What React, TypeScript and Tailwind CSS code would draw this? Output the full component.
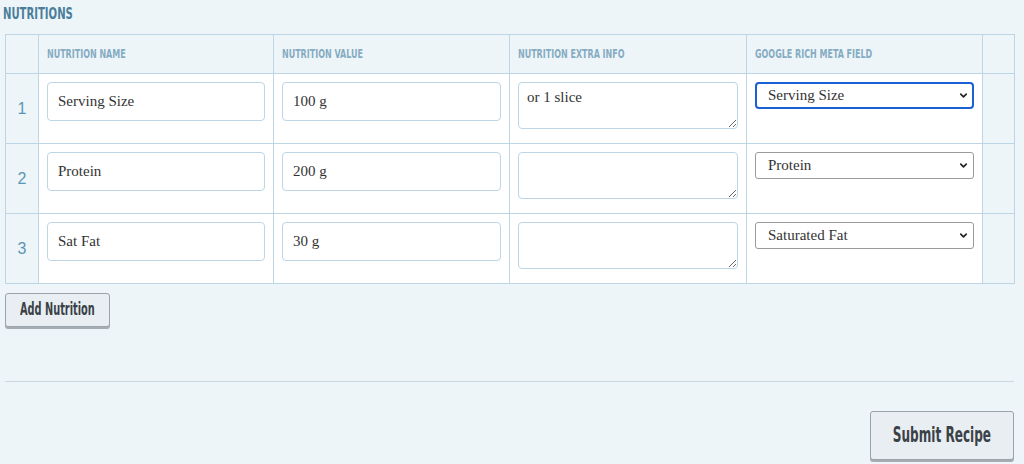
import { ChevronDown } from 'lucide-react';

const rows = [
    { name: 'Serving Size', value: '100 g', extra: 'or 1 slice', meta: 'Serving Size', focused: true },
    { name: 'Protein', value: '200 g', extra: '', meta: 'Protein', focused: false },
    { name: 'Sat Fat', value: '30 g', extra: '', meta: 'Saturated Fat', focused: false },
];

const metaOptions = ['Serving Size', 'Calories', 'Protein', 'Saturated Fat', 'Fat', 'Carbohydrate'];

const narrow = { fontFamily: '"DejaVu Sans Condensed", "DejaVu Sans", sans-serif' };
const serif = { fontFamily: '"Liberation Serif", "DejaVu Serif", serif' };

export default function App() {
    return (
        <div className="w-[1024px] h-[464px] overflow-hidden bg-[#eef5f9] pl-[5px] pr-[10px]">
            <h2 style={narrow} className="pt-[5px] h-[34px] -ml-[2px] text-[16px] font-semibold leading-[18px] text-[#4a7e9b] whitespace-nowrap">
                <span className="inline-block origin-left scale-x-[0.7]">NUTRITIONS</span>
            </h2>

            <table className="w-[1009px] table-fixed border-collapse">
                <colgroup>
                    <col className="w-[33px]" />
                    <col className="w-[235px]" />
                    <col className="w-[236px]" />
                    <col className="w-[237px]" />
                    <col className="w-[236px]" />
                    <col className="w-[32px]" />
                </colgroup>
                <thead>
                    <tr className="h-[39px] bg-[#eef5f9]">
                        <th className="border border-[#bcd6e6]"></th>
                        {['NUTRITION NAME', 'NUTRITION VALUE', 'NUTRITION EXTRA INFO', 'GOOGLE RICH META FIELD'].map((h) => (
                            <th
                                key={h}
                                style={narrow}
                                className="border border-[#bcd6e6] px-[8px] text-left text-[12px] font-bold text-[#85acc2] whitespace-nowrap"
                            >
                                <span className="inline-block origin-left scale-x-[0.74]">{h}</span>
                            </th>
                        ))}
                        <th className="border border-[#bcd6e6]"></th>
                    </tr>
                </thead>
                <tbody>
                    {rows.map((row, i) => (
                        <tr key={i} className="h-[70px]">
                            <td
                                style={{ fontFamily: '"Liberation Sans", sans-serif' }}
                                className="border border-[#bcd6e6] bg-[#eef5f9] text-center text-[16px] text-[#5b95b6]"
                            >
                                {i + 1}
                            </td>
                            <td className="border border-[#bcd6e6] bg-white px-[8px] pt-[8px] pb-[8px] align-top">
                                <input
                                    readOnly
                                    value={row.name}
                                    style={serif}
                                    className="w-full h-[39px] rounded-[4px] border border-[#bcd6e6] bg-white px-[10px] text-[15px] text-[#333] outline-none"
                                />
                            </td>
                            <td className="border border-[#bcd6e6] bg-white px-[8px] pt-[8px] pb-[8px] align-top">
                                <input
                                    readOnly
                                    value={row.value}
                                    style={serif}
                                    className="w-full h-[39px] rounded-[4px] border border-[#bcd6e6] bg-white px-[10px] text-[15px] text-[#333] outline-none"
                                />
                            </td>
                            <td className="border border-[#bcd6e6] bg-white px-[8px] pt-[8px] pb-[8px] align-top">
                                <textarea
                                    readOnly
                                    value={row.extra}
                                    style={serif}
                                    className="block w-full h-[47px] rounded-[4px] border border-[#bcd6e6] bg-white px-[8px] pt-[5px] text-[15px] leading-[18px] text-[#333] outline-none"
                                />
                            </td>
                            <td className="border border-[#bcd6e6] bg-white px-[8px] pt-[8px] pb-[8px] align-top">
                                <div className="relative">
                                    <select
                                        defaultValue={row.meta}
                                        style={serif}
                                        className={
                                            row.focused
                                                ? 'block w-full h-[27px] appearance-none rounded-[4px] border-2 border-[#1a5fd4] bg-white pl-[11px] text-[15px] text-[#333] outline-none'
                                                : 'block w-full h-[27px] appearance-none rounded-[3px] border border-[#9a9a9a] bg-white pl-[12px] text-[15px] text-[#333] outline-none'
                                        }
                                    >
                                        {metaOptions.map((o) => (
                                            <option key={o}>{o}</option>
                                        ))}
                                    </select>
                                    <ChevronDown
                                        strokeWidth={3.5}
                                        className="pointer-events-none absolute right-[5px] top-[8px] w-[11px] h-[11px] text-[#222]"
                                    />
                                </div>
                            </td>
                            <td className="border border-[#bcd6e6] bg-[#eef5f9]"></td>
                        </tr>
                    ))}
                </tbody>
            </table>

            <button
                style={narrow}
                className="mt-[9px] flex h-[34px] w-[105px] items-center justify-center whitespace-nowrap rounded-[3px] border border-[#9aa3a9] bg-[#e8eef1] text-[17px] font-bold text-[#3a4147] shadow-[0_2px_0_#a5adb2]"
            >
                <span className="inline-block scale-x-[0.64]">Add Nutrition</span>
            </button>

            <div className="mt-[54px] h-px bg-[#c9d9e4]"></div>

            <div className="flex justify-end pt-[29px]">
                <button
                    style={narrow}
                    className="flex h-[49px] w-[144px] items-center justify-center whitespace-nowrap rounded-[3px] border border-[#9aa3a9] bg-[#e8eef1] text-[21px] font-bold text-[#3a4147] shadow-[0_2px_0_#a5adb2]"
                >
                    <span className="inline-block scale-x-[0.64]">Submit Recipe</span>
                </button>
            </div>
        </div>
    );
}
